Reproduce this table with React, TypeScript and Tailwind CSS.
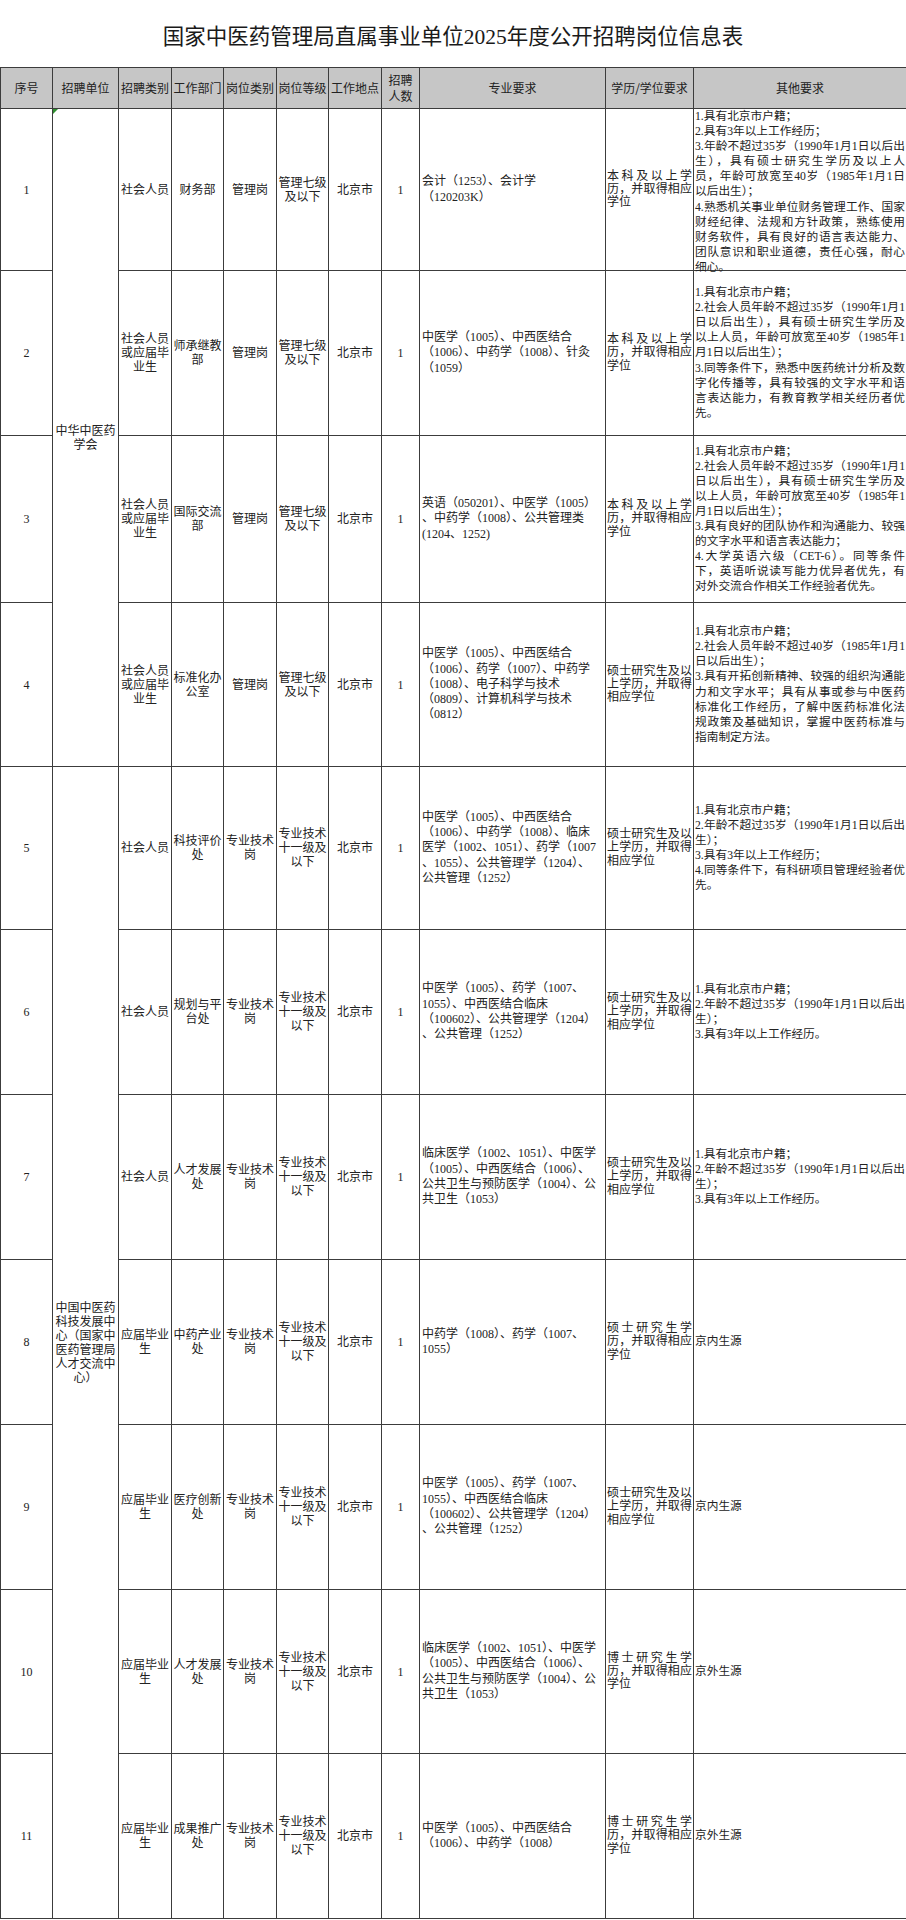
import type { ReactNode } from 'react'

type Row = {
  no: number
  type: string
  dept: string
  post: string
  level: string
  num: number
  major: string[]
  edu: string[]
  other: string[]
  h: number
  otherTop?: boolean
}

const benke = ['本科及以上学', '历，并取得相应', '学位']
const shuoYi = ['硕士研究生及以', '上学历，并取得', '相应学位']
const shuo = ['硕士研究生学', '历，并取得相应', '学位']
const bo = ['博士研究生学', '历，并取得相应', '学位']

const major6 = ['中医学（1005）、药学（1007、', '1055）、中西医结合临床', '（100602）、公共管理学（1204）', '、公共管理（1252）']
const major7 = ['临床医学（1002、1051）、中医学', '（1005）、中西医结合（1006）、', '公共卫生与预防医学（1004）、公', '共卫生（1053）']
const other6 = ['1.具有北京市户籍；', '2.年龄不超过35岁（1990年1月1日以后出', '生）；', '3.具有3年以上工作经历。']

const rows: Row[] = [
  {
    no: 1,
    type: '社会人员',
    dept: '财务部',
    post: '管理岗',
    level: '管理七级及以下',
    num: 1,
    major: ['会计（1253）、会计学', '（120203K）'],
    edu: benke,
    h: 162,
    otherTop: true,
    other: [
      '1.具有北京市户籍；',
      '2.具有3年以上工作经历；',
      '3.年龄不超过35岁（1990年1月1日以后出',
      '生），具有硕士研究生学历及以上人',
      '员，年龄可放宽至40岁（1985年1月1日',
      '以后出生）；',
      '4.熟悉机关事业单位财务管理工作、国家',
      '财经纪律、法规和方针政策，熟练使用',
      '财务软件，具有良好的语言表达能力、',
      '团队意识和职业道德，责任心强，耐心',
      '细心。',
    ],
  },
  {
    no: 2,
    type: '社会人员或应届毕业生',
    dept: '师承继教部',
    post: '管理岗',
    level: '管理七级及以下',
    num: 1,
    major: ['中医学（1005）、中西医结合', '（1006）、中药学（1008）、针灸', '（1059）'],
    edu: benke,
    h: 165,
    other: [
      '1.具有北京市户籍；',
      '2.社会人员年龄不超过35岁（1990年1月1',
      '日以后出生），具有硕士研究生学历及',
      '以上人员，年龄可放宽至40岁（1985年1',
      '月1日以后出生）；',
      '3.同等条件下，熟悉中医药统计分析及数',
      '字化传播等，具有较强的文字水平和语',
      '言表达能力，有教育教学相关经历者优',
      '先。',
    ],
  },
  {
    no: 3,
    type: '社会人员或应届毕业生',
    dept: '国际交流部',
    post: '管理岗',
    level: '管理七级及以下',
    num: 1,
    major: ['英语（050201）、中医学（1005）', '、中药学（1008）、公共管理类', '(1204、1252)'],
    edu: benke,
    h: 167,
    other: [
      '1.具有北京市户籍；',
      '2.社会人员年龄不超过35岁（1990年1月1',
      '日以后出生），具有硕士研究生学历及',
      '以上人员，年龄可放宽至40岁（1985年1',
      '月1日以后出生）；',
      '3.具有良好的团队协作和沟通能力、较强',
      '的文字水平和语言表达能力；',
      '4.大学英语六级（CET-6）。同等条件',
      '下，英语听说读写能力优异者优先，有',
      '对外交流合作相关工作经验者优先。',
    ],
  },
  {
    no: 4,
    type: '社会人员或应届毕业生',
    dept: '标准化办公室',
    post: '管理岗',
    level: '管理七级及以下',
    num: 1,
    major: ['中医学（1005）、中西医结合', '（1006）、药学（1007）、中药学', '（1008）、电子科学与技术', '（0809）、计算机科学与技术', '（0812）'],
    edu: shuoYi,
    h: 164,
    other: [
      '1.具有北京市户籍；',
      '2.社会人员年龄不超过40岁（1985年1月1',
      '日以后出生）；',
      '3.具有开拓创新精神、较强的组织沟通能',
      '力和文字水平；具有从事或参与中医药',
      '标准化工作经历，了解中医药标准化法',
      '规政策及基础知识，掌握中医药标准与',
      '指南制定方法。',
    ],
  },
  {
    no: 5,
    type: '社会人员',
    dept: '科技评价处',
    post: '专业技术岗',
    level: '专业技术十一级及以下',
    num: 1,
    major: ['中医学（1005）、中西医结合', '（1006）、中药学（1008）、临床', '医学（1002、1051）、药学（1007', '、1055）、公共管理学（1204）、', '公共管理（1252）'],
    edu: shuoYi,
    h: 163,
    other: [
      '1.具有北京市户籍；',
      '2.年龄不超过35岁（1990年1月1日以后出',
      '生）；',
      '3.具有3年以上工作经历；',
      '4.同等条件下，有科研项目管理经验者优',
      '先。',
    ],
  },
  { no: 6, type: '社会人员', dept: '规划与平台处', post: '专业技术岗', level: '专业技术十一级及以下', num: 1, major: major6, edu: shuoYi, h: 165, other: other6 },
  { no: 7, type: '社会人员', dept: '人才发展处', post: '专业技术岗', level: '专业技术十一级及以下', num: 1, major: major7, edu: shuoYi, h: 165, other: other6 },
  { no: 8, type: '应届毕业生', dept: '中药产业处', post: '专业技术岗', level: '专业技术十一级及以下', num: 1, major: ['中药学（1008）、药学（1007、', '1055）'], edu: shuo, h: 165, other: ['京内生源'] },
  { no: 9, type: '应届毕业生', dept: '医疗创新处', post: '专业技术岗', level: '专业技术十一级及以下', num: 1, major: major6, edu: shuoYi, h: 165, other: ['京内生源'] },
  { no: 10, type: '应届毕业生', dept: '人才发展处', post: '专业技术岗', level: '专业技术十一级及以下', num: 1, major: major7, edu: bo, h: 164, other: ['京外生源'] },
  { no: 11, type: '应届毕业生', dept: '成果推广处', post: '专业技术岗', level: '专业技术十一级及以下', num: 1, major: ['中医学（1005）、中西医结合', '（1006）、中药学（1008）'], edu: bo, h: 165, other: ['京外生源'] },
]

const cell = 'border border-[#3c3c3c] p-0 align-middle'
const center = `${cell} px-[1px] text-center leading-[14px]`

function Justified({ lines, justifyAll }: { lines: string[]; justifyAll?: boolean }) {
  return (
    <>
      {lines.map((line, i) => {
        const last = i === lines.length - 1
        const justify = justifyAll ? !last : !(line.endsWith('；') || line.endsWith('。') || last)
        return (
          <div key={i} className={justify ? 'text-justify [text-align-last:justify]' : 'whitespace-nowrap text-left'}>
            {line}
          </div>
        )
      })}
    </>
  )
}

function Th({ children }: { children: ReactNode }) {
  return <th className={`${cell} bg-[#c6c6c6] text-center font-normal leading-[16px]`}>{children}</th>
}

export default function App() {
  return (
    <div className="w-[906px] bg-white font-['Liberation_Serif','Noto_Sans_CJK_SC',serif] text-[12px] text-[#222]">
      <div className="flex h-[67px] items-center justify-center pt-[7px] text-[21.5px] text-[#1a1a1a]">
        国家中医药管理局直属事业单位2025年度公开招聘岗位信息表
      </div>
      <table className="w-[906px] table-fixed border-collapse">
        <colgroup>
          <col className="w-[52px]" />
          <col className="w-[66px]" />
          <col className="w-[53px]" />
          <col className="w-[52px]" />
          <col className="w-[53px]" />
          <col className="w-[52px]" />
          <col className="w-[53px]" />
          <col className="w-[38px]" />
          <col className="w-[186px]" />
          <col className="w-[88px]" />
          <col className="w-[213px]" />
        </colgroup>
        <thead className="font-['Noto_Sans_CJK_SC',sans-serif] text-[12px] text-[#222]">
          <tr className="h-[41px]">
            <Th>序号</Th>
            <Th>招聘单位</Th>
            <Th>招聘类别</Th>
            <Th>工作部门</Th>
            <Th>岗位类别</Th>
            <Th>岗位等级</Th>
            <Th>工作地点</Th>
            <Th>
              招聘
              <br />
              人数
            </Th>
            <Th>专业要求</Th>
            <Th>学历/学位要求</Th>
            <Th>其他要求</Th>
          </tr>
        </thead>
        <tbody>
          {rows.map((row) => (
            <tr key={row.no} style={{ height: row.h }}>
              <td className={center}>{row.no}</td>
              {row.no === 1 && (
                <td rowSpan={4} className={`${center} relative`}>
                  <span className="absolute left-0 top-0 h-0 w-0 border-r-[5px] border-t-[5px] border-r-transparent border-t-[#2f8f2f]" />
                  中华中医药学会
                </td>
              )}
              {row.no === 5 && (
                <td rowSpan={7} className={center}>
                  中国中医药科技发展中心（国家中医药管理局人才交流中心）
                </td>
              )}
              <td className={center}>{row.type}</td>
              <td className={center}>{row.dept}</td>
              <td className={center}>{row.post}</td>
              <td className={center}>{row.level}</td>
              <td className={center}>北京市</td>
              <td className={center}>{row.num}</td>
              <td className={`${cell} pl-[2px] leading-[15.3px]`}>
                {row.major.map((line, i) => (
                  <div key={i} className="whitespace-nowrap">
                    {line}
                  </div>
                ))}
              </td>
              <td className={`${cell} px-[1px] leading-[13.3px]`}>
                <Justified lines={row.edu} justifyAll />
              </td>
              <td className={`${cell} px-[1px] text-[11.7px] leading-[15.1px] ${row.otherTop ? 'align-top' : ''}`}>
                {row.otherTop ? (
                  <div className="h-[160px] overflow-visible">
                    <Justified lines={row.other} />
                  </div>
                ) : (
                  <Justified lines={row.other} />
                )}
              </td>
            </tr>
          ))}
        </tbody>
      </table>
    </div>
  )
}
